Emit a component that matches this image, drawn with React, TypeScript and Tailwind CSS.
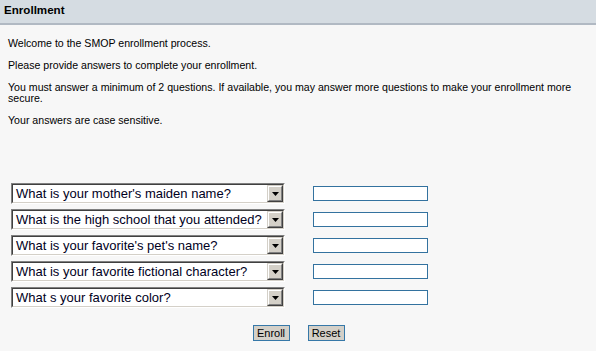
import React from 'react';

const questions = [
  "What is your mother's maiden name?",
  'What is the high school that you attended?',
  "What is your favorite's pet's name?",
  'What is your favorite fictional character?',
  'What s your favorite color?',
];

const FakeSelect: React.FC<{ label: string }> = ({ label }) => (
  // classic win-style inset select box
  <div className="w-[274px] h-[21px] border border-t-[#808080] border-l-[#808080] border-b-white border-r-white">
    <div className="flex h-full border border-t-[#404040] border-l-[#404040] border-b-[#d4d0c8] border-r-[#d4d0c8] bg-white">
      <span className="flex-1 pl-[3px] text-[13px] leading-[17px] text-[#000022] whitespace-nowrap overflow-hidden">
        {label}
      </span>
      <div className="w-[16px] h-full border border-t-[#d4d0c8] border-l-[#d4d0c8] border-b-[#404040] border-r-[#404040]">
        <div className="flex h-full items-center justify-center bg-[#d4d0c8] border border-t-white border-l-white border-b-[#808080] border-r-[#808080]">
          <svg width="7" height="4" viewBox="0 0 7 4" aria-hidden="true">
            <polygon points="0,0 7,0 3.5,4" fill="#000" />
          </svg>
        </div>
      </div>
    </div>
  </div>
);

export default function App() {
  return (
    <div className="w-[596px] h-[351px] bg-[#f7f7f7] font-['Liberation_Sans',Arial,sans-serif] text-black overflow-hidden">
      {/* ── Header bar ───────────────────────────── */}
      <div className="h-[25px] bg-[#d5dce2] border-b-2 border-[#b1b9c3] pl-[4px] pt-[2px] text-[11.6px] font-bold leading-[15px]">
        Enrollment
      </div>

      {/* ── Intro copy ───────────────────────────── */}
      <div className="px-[8px] pt-[13px] text-[10.6px] leading-[11px]">
        <p className="mb-[11px]">Welcome to the SMOP enrollment process.</p>
        <p className="mb-[11px]">Please provide answers to complete your enrollment.</p>
        <p className="mb-[11px]">
          You must answer a minimum of 2 questions. If available, you may answer more questions to make your enrollment more secure.
        </p>
        <p>Your answers are case sensitive.</p>
      </div>

      {/* ── Question rows ────────────────────────── */}
      <div className="mt-[57px] pl-[11px] flex flex-col gap-[5px]">
        {questions.map((q) => (
          <div key={q} className="flex items-center gap-[28px]">
            <FakeSelect label={q} />
            <input
              type="text"
              className="w-[115px] h-[15px] bg-white border border-[#33729f] outline-none"
            />
          </div>
        ))}
      </div>

      {/* ── Actions ──────────────────────────────── */}
      <div className="mt-[17px] flex justify-center gap-[18px] pl-[1px]">
        <button className="w-[37px] h-[16px] bg-[#d4d0c8] border border-[#3678a8] text-[11px] leading-[13px] text-black">
          Enroll
        </button>
        <button className="w-[37px] h-[16px] bg-[#d4d0c8] border border-[#3678a8] text-[11px] leading-[13px] text-black">
          Reset
        </button>
      </div>
    </div>
  );
}
